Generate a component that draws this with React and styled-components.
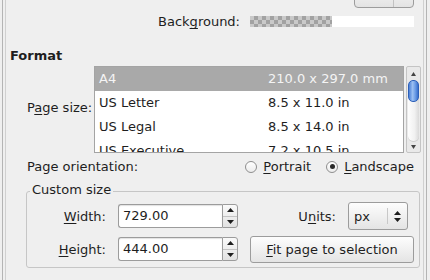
import React from 'react';
import styled, { createGlobalStyle } from 'styled-components';

const GlobalStyle = createGlobalStyle`
    html, body {
        margin: 0;
        padding: 0;
        background: #efefef;
    }
    body {
        font-family: "DejaVu Sans", "Noto Sans", sans-serif;
        font-size: 13px;
        line-height: 15px;
        color: #1e1e1e;
    }
`;

const Window = styled.div`
    width: 430px;
    height: 280px;
    overflow: hidden;
    padding-left: 2px;
    box-sizing: border-box;
`;

const OuterFrame = styled.div`
    width: 425px;
    height: 280px;
    box-sizing: border-box;
    padding: 0 2px;
    border-left: 1px solid #b4b4b4;
    border-right: 1px solid #b4b4b4;
`;

const Page = styled.div`
    height: 100%;
    box-sizing: border-box;
    display: flex;
    flex-direction: column;
    border-left: 1px solid #d0d0d0;
    border-right: 1px solid #d0d0d0;
`;

const TopRow = styled.div`
    display: flex;
    justify-content: flex-end;
    padding-right: 9px;
    margin-top: -20px;
`;

const CutButton = styled.div`
    width: 60px;
    height: 28px;
    box-sizing: border-box;
    display: flex;
    border: 1px solid #9c9c9c;
    border-radius: 4px;
    background: linear-gradient(#fbfbfb, #e3e3e3);
`;

const CutPart = styled.div`
    flex: ${p => (p.$main ? '0 0 38px' : '1')};
    border-left: ${p => (p.$main ? 'none' : '1px solid #c2c2c2')};
`;

const BackgroundRow = styled.div`
    display: flex;
    justify-content: flex-end;
    align-items: center;
    gap: 10px;
    padding-right: 9px;
    margin-top: 6px;
`;

const Swatch = styled.div`
    width: 164px;
    height: 11px;
    display: flex;
`;

const SwatchHalf = styled.div`
    flex: 1;
    background: ${p => (p.$checker
        ? 'repeating-conic-gradient(#a2a2a2 0 25%, #c9c9c9 0 50%) 0 0 / 8px 8px'
        : '#ffffff')};
`;

const SectionTitle = styled.div`
    font-weight: bold;
    margin-top: 19px;
    padding-left: 4px;
`;

const Mn = styled.u`
    text-decoration: underline;
    text-underline-offset: 2px;
    text-decoration-thickness: 1px;
    text-decoration-skip-ink: none;
`;

const PageSizeRow = styled.div`
    display: flex;
    align-items: flex-start;
    margin-top: 3px;
    padding: 0 2px 0 21px;
`;

const SideLabel = styled.div`
    flex: 0 0 67px;
    margin-top: 34px;
    white-space: nowrap;
`;

const ListBox = styled.div`
    width: 310px;
    height: 87px;
    box-sizing: border-box;
    border: 1px solid #a4a4a4;
    background: #ffffff;
    overflow: hidden;
`;

const ListRow = styled.div`
    display: grid;
    grid-template-columns: 169px 1fr;
    height: 24px;
    line-height: 24px;
    padding-left: 4px;
    white-space: nowrap;
    background: ${p => (p.$selected ? '#a9a9a9' : 'transparent')};
    color: ${p => (p.$selected ? '#f4f4f4' : '#1e1e1e')};
`;

const Scrollbar = styled.div`
    width: 15px;
    height: 87px;
    margin-left: 2px;
    box-sizing: border-box;
    border: 1px solid #c4c4c4;
    border-radius: 2px;
    background: #e9e9e9;
    display: flex;
    flex-direction: column;
    align-items: center;
`;

const Stepper = styled.div`
    height: ${p => p.$h}px;
    display: flex;
    align-items: center;
    justify-content: center;
`;

const Trough = styled.div`
    flex: 1;
    width: 11px;
    border-radius: 5px;
    background: linear-gradient(to right, #fdfdfd, #f1f1f1 60%, #d9d9d9);
    box-shadow: inset 0 -1px 0 #cfcfcf;
`;

const Thumb = styled.div`
    height: 22px;
    box-sizing: border-box;
    border: 1px solid #2c5fb8;
    border-radius: 5px;
    background: linear-gradient(to right, #4b80d6, #9cc0f2 40%, #6b9ce6 70%, #3a6fcb);
`;

const OrientationRow = styled.div`
    display: flex;
    align-items: center;
    margin-top: 6px;
    padding: 0 9px 0 21px;
`;

const RadioGroup = styled.div`
    margin-left: auto;
    display: flex;
    gap: 15px;
`;

const RadioItem = styled.label`
    display: inline-flex;
    align-items: center;
    gap: 6px;
`;

const RadioCircle = styled.span`
    width: 12px;
    height: 12px;
    box-sizing: border-box;
    border: 1px solid #8e8e8e;
    border-radius: 50%;
    background: linear-gradient(#ffffff, #ececec);
    display: flex;
    align-items: center;
    justify-content: center;

    &::after {
        content: '';
        width: 5px;
        height: 5px;
        border-radius: 50%;
        background: ${p => (p.$checked ? '#2a2a2a' : 'transparent')};
    }
`;

const Frame = styled.fieldset`
    margin: 8px 3px 0 20px;
    padding: 1px 5px 4px 0;
    border: 1px solid #c6c6c6;
    border-radius: 3px;
    min-inline-size: 0;
`;

const FrameTitle = styled.legend`
    margin-left: 3px;
    padding: 0 2px 4px;
    line-height: 15px;
`;

const SizeGrid = styled.div`
    display: grid;
    grid-template-columns: 79px 120px 1fr;
    grid-auto-rows: 28px;
    column-gap: 12px;
    row-gap: 5px;
    align-items: center;
`;

const RightLabel = styled.div`
    text-align: right;
    white-space: nowrap;
`;

const SpinField = styled.div`
    display: flex;
    height: 24px;
`;

const SpinInput = styled.div`
    flex: 1;
    box-sizing: border-box;
    border: 1px solid #9c9c9c;
    border-right: none;
    border-radius: 3px 0 0 3px;
    background: #ffffff;
    padding-left: 4px;
    line-height: 22px;
    box-shadow: inset 0 1px 1px #e2e2e2;
`;

const SpinButtons = styled.div`
    width: 16px;
    box-sizing: border-box;
    border: 1px solid #9c9c9c;
    border-radius: 0 3px 3px 0;
    display: flex;
    flex-direction: column;
    background: linear-gradient(#fafafa, #e2e2e2);
`;

const SpinHalf = styled.div`
    flex: 1;
    display: flex;
    align-items: center;
    justify-content: center;
    border-top: ${p => (p.$lower ? '1px solid #c4c4c4' : 'none')};
`;

const UnitsCell = styled.div`
    display: flex;
    justify-content: flex-end;
    align-items: center;
    gap: 12px;
    padding-right: 6px;
`;

const Combo = styled.div`
    width: 60px;
    height: 28px;
    box-sizing: border-box;
    display: flex;
    align-items: center;
    border: 1px solid #9c9c9c;
    border-radius: 3px;
    background: linear-gradient(#fdfdfd, #e4e4e4);
`;

const ComboText = styled.span`
    flex: 0 0 38px;
    padding-left: 5px;
    box-sizing: border-box;
`;

const ComboArrows = styled.span`
    flex: 1;
    height: 16px;
    border-left: 1px solid #c8c8c8;
    display: flex;
    align-items: center;
    justify-content: center;
`;

const PushButton = styled.div`
    height: 27px;
    box-sizing: border-box;
    display: flex;
    align-items: center;
    justify-content: center;
    border: 1px solid #9c9c9c;
    border-radius: 3px;
    background: linear-gradient(#fdfdfd, #e4e4e4);
    white-space: nowrap;
`;

const Arrow = ({ down, w = 7, h = 4, color = '#1e1e1e' }) => (
    <svg width={w} height={h} viewBox={`0 0 ${w} ${h}`}>
        <polygon
            points={down ? `0,0 ${w},0 ${w / 2},${h}` : `0,${h} ${w},${h} ${w / 2},0`}
            fill={color}
        />
    </svg>
);

const sizes = [
    ['A4', '210.0 x 297.0 mm'],
    ['US Letter', '8.5 x 11.0 in'],
    ['US Legal', '8.5 x 14.0 in'],
    ['US Executive', '7.2 x 10.5 in'],
];

const Spin = ({ value }) => (
    <SpinField>
        <SpinInput>{value}</SpinInput>
        <SpinButtons>
            <SpinHalf><Arrow w={7} h={4} /></SpinHalf>
            <SpinHalf $lower><Arrow down w={7} h={4} /></SpinHalf>
        </SpinButtons>
    </SpinField>
);

const App = () => {
    return (
        <Window>
            <GlobalStyle />
            <OuterFrame>
                <Page>
                    <TopRow>
                        <CutButton>
                            <CutPart $main />
                            <CutPart />
                        </CutButton>
                    </TopRow>

                    <BackgroundRow>
                        <span>Back<Mn>g</Mn>round:</span>
                        <Swatch>
                            <SwatchHalf $checker />
                            <SwatchHalf />
                        </Swatch>
                    </BackgroundRow>

                    <SectionTitle>Format</SectionTitle>

                    <PageSizeRow>
                        <SideLabel>P<Mn>a</Mn>ge size:</SideLabel>
                        <ListBox>
                            {sizes.map(([name, dims], i) => (
                                <ListRow key={name} $selected={i === 0}>
                                    <span>{name}</span>
                                    <span>{dims}</span>
                                </ListRow>
                            ))}
                        </ListBox>
                        <Scrollbar>
                            <Stepper $h={13}><Arrow w={5} h={4} color="#444" /></Stepper>
                            <Trough>
                                <Thumb />
                            </Trough>
                            <Stepper $h={10}><Arrow down w={5} h={4} color="#444" /></Stepper>
                        </Scrollbar>
                    </PageSizeRow>

                    <OrientationRow>
                        <span>Page orientation:</span>
                        <RadioGroup>
                            <RadioItem>
                                <RadioCircle />
                                <span><Mn>P</Mn>ortrait</span>
                            </RadioItem>
                            <RadioItem>
                                <RadioCircle $checked />
                                <span><Mn>L</Mn>andscape</span>
                            </RadioItem>
                        </RadioGroup>
                    </OrientationRow>

                    <Frame>
                        <FrameTitle>Custom size</FrameTitle>
                        <SizeGrid>
                            <RightLabel><Mn>W</Mn>idth:</RightLabel>
                            <Spin value="729.00" />
                            <UnitsCell>
                                <span>U<Mn>n</Mn>its:</span>
                                <Combo>
                                    <ComboText>px</ComboText>
                                    <ComboArrows>
                                        <svg width="7" height="11" viewBox="0 0 7 11">
                                            <polygon points="0,4 7,4 3.5,0" fill="#1e1e1e" />
                                            <polygon points="0,7 7,7 3.5,11" fill="#1e1e1e" />
                                        </svg>
                                    </ComboArrows>
                                </Combo>
                            </UnitsCell>
                            <RightLabel><Mn>H</Mn>eight:</RightLabel>
                            <Spin value="444.00" />
                            <PushButton><span><Mn>F</Mn>it page to selection</span></PushButton>
                        </SizeGrid>
                    </Frame>
                </Page>
            </OuterFrame>
        </Window>
    );
};

export default App;
